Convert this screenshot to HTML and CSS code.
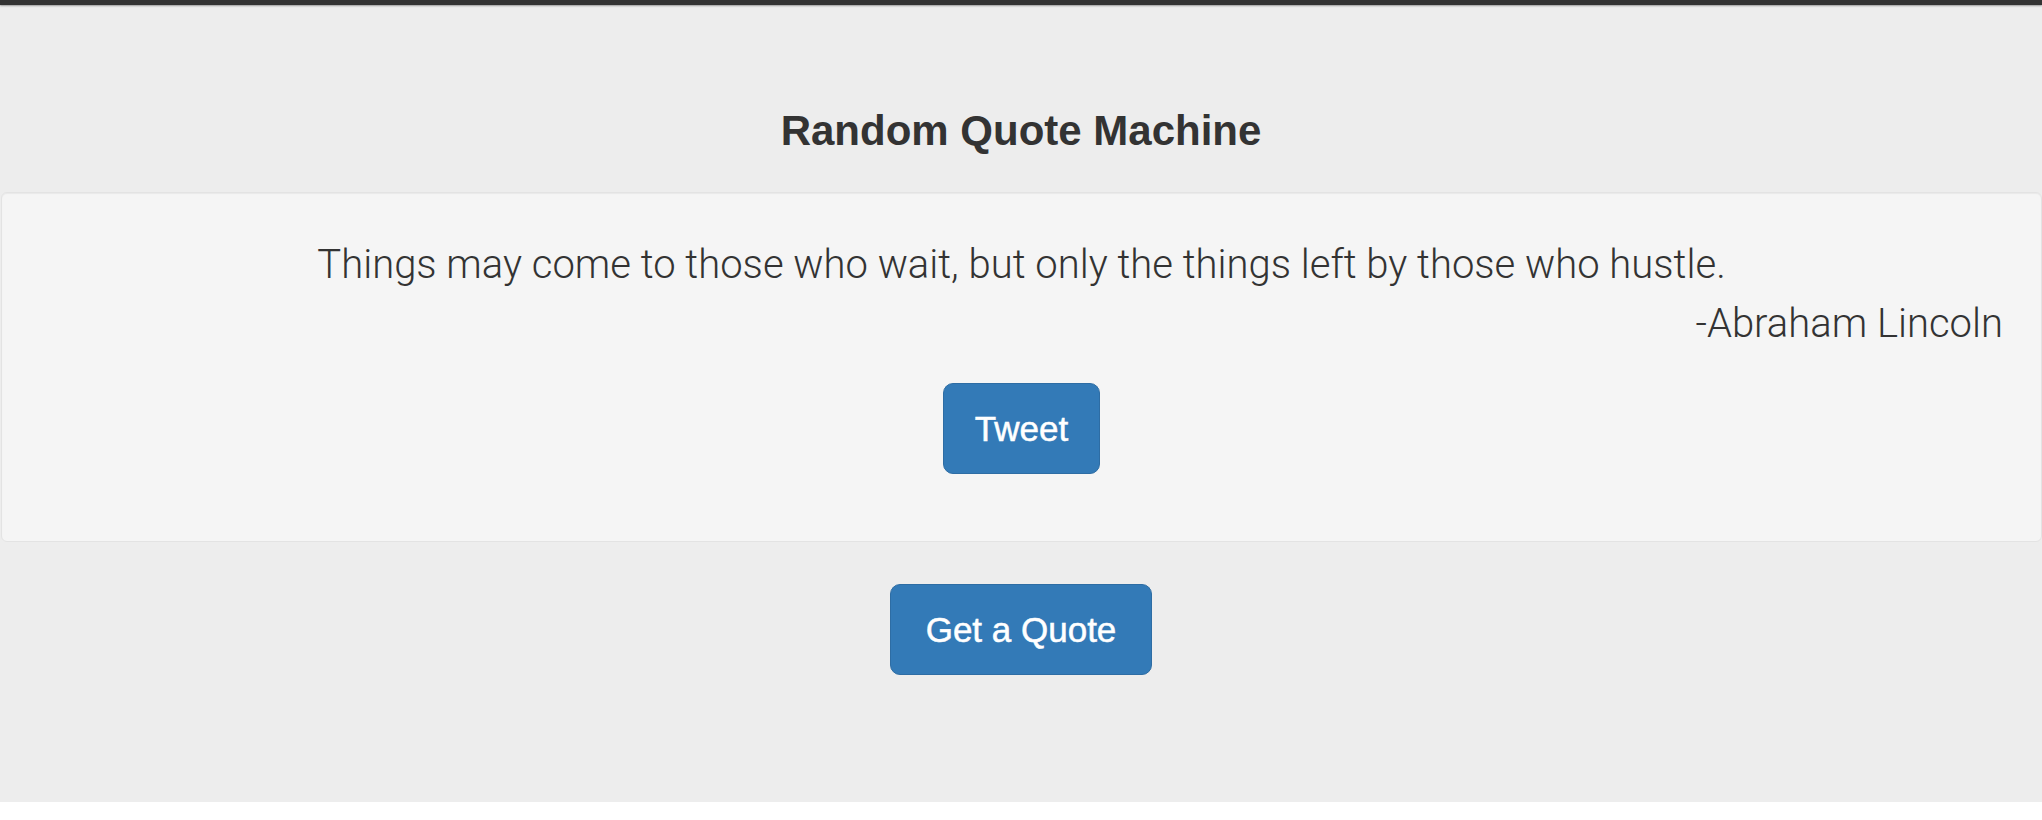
FILE: index.html
```html
<!DOCTYPE html>
<html lang="en">
<head>
<meta charset="utf-8">
<title>Random Quote Machine</title>
<link rel="stylesheet" href="styles.css">
</head>
<body>
<div class="page">
  <div class="topbar"></div>
  <h1 class="title">Random Quote Machine</h1>
  <div class="well">
    <p class="quote">Things may come to those who wait, but only the things left by those who hustle.</p>
    <p class="author">-Abraham Lincoln</p>
    <div class="actions">
      <button class="btn btn-tweet">Tweet</button>
    </div>
  </div>
  <div class="actions outer">
    <button class="btn btn-quote">Get a Quote</button>
  </div>
</div>
</body>
</html>
```
FILE: styles.css
```css
html, body {
  margin: 0;
  padding: 0;
  background: #ffffff;
}
body {
  font-family: "Liberation Sans", Arial, sans-serif;
  color: #333333;
}
.page {
  background: #ededed;
  height: 802px;
  display: flex;
  flex-direction: column;
}
.topbar {
  height: 5px;
  background: #333333;
  box-shadow: 0 1px 2px rgba(0, 0, 0, 0.35);
}
.title {
  margin: 103px 0 38px;
  font-size: 42px;
  line-height: 46px;
  font-weight: 700;
  text-align: center;
  color: #333333;
}
.well {
  margin: 0 0 0 1px;
  background: #f5f5f5;
  border: 1px solid #e3e3e3;
  border-radius: 6px;
  box-shadow: inset 0 1px 1px rgba(0, 0, 0, 0.05);
  padding: 44px 38px 67px;
}
.quote {
  margin: 0;
  font-family: Roboto, "Liberation Sans", sans-serif;
  font-weight: 300;
  font-size: 40px;
  line-height: 56px;
  text-align: center;
  color: #333333;
}
.author {
  margin: 3px 0 0;
  font-family: Roboto, "Liberation Sans", sans-serif;
  font-weight: 300;
  font-size: 40px;
  line-height: 56px;
  text-align: right;
  color: #333333;
}
.actions {
  display: flex;
  justify-content: center;
  margin-top: 31px;
}
.actions.outer {
  margin-top: 42px;
}
.btn {
  height: 91px;
  padding: 0 31px;
  background: #337ab7;
  border: 1px solid #2e6da4;
  border-radius: 10px;
  color: #ffffff;
  font-family: "Liberation Sans", Arial, sans-serif;
  font-size: 35px;
  line-height: 1;
  -webkit-text-stroke: 0.5px #ffffff;
  cursor: pointer;
}
.btn-quote {
  padding: 0 35px;
}
```
